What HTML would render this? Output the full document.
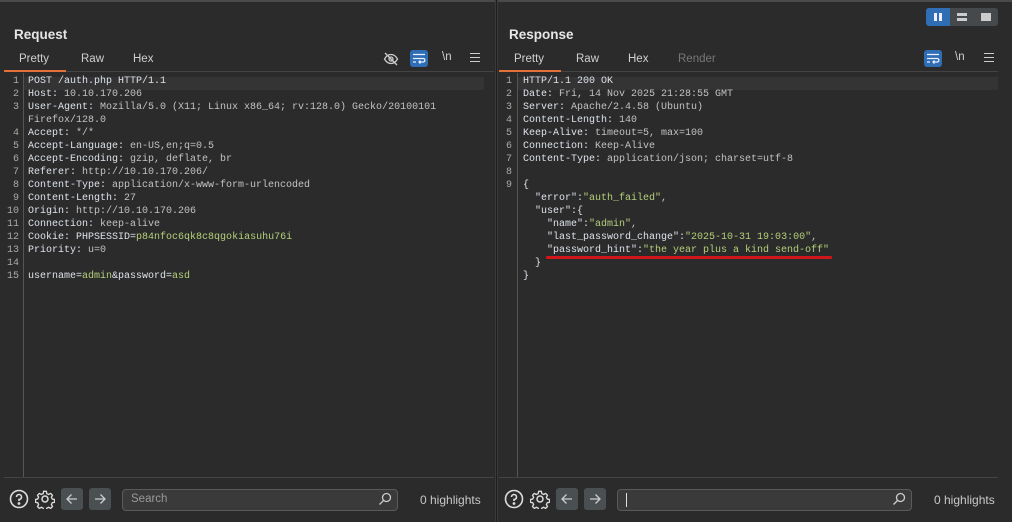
<!DOCTYPE html>
<html><head><meta charset="utf-8"><style>
*{margin:0;padding:0;box-sizing:border-box}
body{width:1012px;height:522px;background:#2b2b2b;font-family:"Liberation Sans",sans-serif;color:#ddd;position:relative;overflow:hidden}
.abs{position:absolute}
.title{font-weight:bold;font-size:13.5px;color:#e6e6e6}
.tab{font-size:11.5px;color:#d0d0d0}
.code{font-family:"Liberation Mono",monospace;font-size:10px;line-height:13px;white-space:pre;color:#c2c2c2}
.k{color:#dde2ea}.g{color:#b5cf7a}
.ln{font-family:"Liberation Mono",monospace;font-size:10px;line-height:13px;color:#aaa;text-align:right;white-space:pre}
.btn{width:22px;height:22px;border-radius:3px;background:#4a4f52;}
.search{border:1px solid #5a5a5a;border-radius:4px;background:#3a3a3a;height:22px}
</style></head><body>
<div class="abs" style="left:0;top:0;width:1012px;height:2px;background:#4a4a4a"></div>
<div class="abs" style="left:495px;top:0;width:3px;height:522px;background:#3a3a3a"></div>
<div class="abs" style="left:496px;top:0;width:1px;height:522px;background:#1e1e1e"></div>

<!-- LEFT -->
<div class="abs title" style="left:14px;top:27px">Request</div>
<div class="abs tab" style="left:19px;top:53px">Pretty</div>
<div class="abs tab" style="left:81px;top:53px">Raw</div>
<div class="abs tab" style="left:133px;top:53px">Hex</div>
<div class="abs" style="left:4px;top:70px;width:62px;height:2px;background:#e3703a"></div>
<div class="abs" style="left:66px;top:71px;width:428px;height:1px;background:#444"></div>
<svg class="abs" style="left:383px;top:51px" width="16" height="16" viewBox="0 0 16 16" fill="none" stroke="#ccc" stroke-width="1.3"><path d="M1.5 8C3.5 4.5 6 3.5 8 3.5S12.5 4.5 14.5 8C12.5 11.5 10 12.5 8 12.5S3.5 11.5 1.5 8Z"/><circle cx="8" cy="8" r="2"/><path d="M2 2L14 14"/></svg>
<div class="abs" style="left:410px;top:50px;width:18px;height:17px;border-radius:3px;background:#2f6db5"></div>
<svg class="abs" style="left:412px;top:52px" width="14" height="13" viewBox="0 0 14 13" fill="none" stroke="#e8f0ff" stroke-width="1.3"><path d="M1 2.5H13M1 6.5H11.5A1.8 1.8 0 0 1 11.5 10H7M8.5 8.5L7 10L8.5 11.5M1 10H4"/></svg>
<div class="abs tab" style="left:442px;top:51px">\n</div>
<div class="abs" style="left:470px;top:53px;width:10px;height:9px;border-top:1.3px solid #ccc;border-bottom:1.3px solid #ccc"><div style="margin-top:3px;height:1.3px;background:#ccc"></div></div>

<div class="abs" style="left:23px;top:73px;width:1px;height:404px;background:#555"></div>
<div class="abs" style="left:24px;top:77px;width:460px;height:13px;background:#343434"></div>
<div class="abs ln" style="left:0;top:75px;width:19px">1
2
3

4
5
6
7
8
9
10
11
12
13
14
15</div>
<div class="abs code" style="left:28px;top:75px"><span class="k">POST /auth.php HTTP/1.1</span>
<span class="k">Host:</span> 10.10.170.206
<span class="k">User-Agent:</span> Mozilla/5.0 (X11; Linux x86_64; rv:128.0) Gecko/20100101
Firefox/128.0
<span class="k">Accept:</span> */*
<span class="k">Accept-Language:</span> en-US,en;q=0.5
<span class="k">Accept-Encoding:</span> gzip, deflate, br
<span class="k">Referer:</span> http://10.10.170.206/
<span class="k">Content-Type:</span> application/x-www-form-urlencoded
<span class="k">Content-Length:</span> 27
<span class="k">Origin:</span> http://10.10.170.206
<span class="k">Connection:</span> keep-alive
<span class="k">Cookie:</span> <span class="k">PHPSESSID=</span><span class="g">p84nfoc6qk8c8qgokiasuhu76i</span>
<span class="k">Priority:</span> u=0

<span class="k">username=</span><span class="g">admin</span><span class="k">&amp;password=</span><span class="g">asd</span></div>

<div class="abs" style="left:4px;top:477px;width:490px;height:1px;background:#444"></div>

<!-- RIGHT -->
<div class="abs" style="left:926px;top:8px;width:72px;height:18px;border-radius:3px;background:#45494c"></div>
<div class="abs" style="left:926px;top:8px;width:24px;height:18px;border-radius:3px 0 0 3px;background:#2f6db5"></div>
<div class="abs" style="left:934px;top:13px;width:3px;height:8px;background:#eef"></div>
<div class="abs" style="left:939px;top:13px;width:3px;height:8px;background:#eef"></div>
<div class="abs" style="left:957px;top:13px;width:10px;height:3px;background:#ccc"></div>
<div class="abs" style="left:957px;top:18px;width:10px;height:3px;background:#ccc"></div>
<div class="abs" style="left:981px;top:13px;width:10px;height:8px;background:#ccc"></div>

<div class="abs title" style="left:509px;top:27px">Response</div>
<div class="abs tab" style="left:514px;top:53px">Pretty</div>
<div class="abs tab" style="left:576px;top:53px">Raw</div>
<div class="abs tab" style="left:628px;top:53px">Hex</div>
<div class="abs tab" style="left:678px;top:53px;color:#777">Render</div>
<div class="abs" style="left:499px;top:70px;width:62px;height:2px;background:#e3703a"></div>
<div class="abs" style="left:561px;top:71px;width:437px;height:1px;background:#444"></div>
<div class="abs" style="left:924px;top:50px;width:18px;height:17px;border-radius:3px;background:#2f6db5"></div>
<svg class="abs" style="left:926px;top:52px" width="14" height="13" viewBox="0 0 14 13" fill="none" stroke="#e8f0ff" stroke-width="1.3"><path d="M1 2.5H13M1 6.5H11.5A1.8 1.8 0 0 1 11.5 10H7M8.5 8.5L7 10L8.5 11.5M1 10H4"/></svg>
<div class="abs tab" style="left:955px;top:51px">\n</div>
<div class="abs" style="left:984px;top:53px;width:10px;height:9px;border-top:1.3px solid #ccc;border-bottom:1.3px solid #ccc"><div style="margin-top:3px;height:1.3px;background:#ccc"></div></div>

<div class="abs" style="left:517px;top:73px;width:1px;height:404px;background:#555"></div>
<div class="abs" style="left:518px;top:77px;width:480px;height:13px;background:#343434"></div>
<div class="abs ln" style="left:498px;top:75px;width:14px">1
2
3
4
5
6
7
8
9</div>
<div class="abs code" style="left:523px;top:75px"><span class="k">HTTP/1.1 200 OK</span>
<span class="k">Date:</span> Fri, 14 Nov 2025 21:28:55 GMT
<span class="k">Server:</span> Apache/2.4.58 (Ubuntu)
<span class="k">Content-Length:</span> 140
<span class="k">Keep-Alive:</span> timeout=5, max=100
<span class="k">Connection:</span> Keep-Alive
<span class="k">Content-Type:</span> application/json; charset=utf-8

<span class="k">{</span>
  <span class="k">"error":</span><span class="g">"auth_failed"</span>,
  <span class="k">"user":{</span>
    <span class="k">"name":</span><span class="g">"admin"</span>,
    <span class="k">"last_password_change":</span><span class="g">"2025-10-31 19:03:00"</span>,
    <span class="k">"password_hint":</span><span class="g">"the year plus a kind send-off"</span>
  <span class="k">}</span>
<span class="k">}</span></div>
<div class="abs" style="left:546px;top:256px;width:286px;height:3px;background:#d0161b;border-radius:1px"></div>
<div class="abs" style="left:499px;top:477px;width:499px;height:1px;background:#444"></div>

<!-- bottom bars -->
<svg class="abs" style="left:9px;top:489px" width="20" height="20" viewBox="0 0 20 20" fill="none" stroke="#ddd" stroke-width="1.6"><circle cx="10" cy="10" r="8.5"/><path d="M7.5 8A2.5 2.5 0 1 1 10 10.5V12"/><circle cx="10" cy="14.5" r=".6" fill="#ddd"/></svg>
<svg class="abs" style="left:35px;top:489px" width="20" height="20" viewBox="0 0 20 20" fill="none" stroke="#ddd" stroke-width="1.5"><circle cx="10" cy="10" r="3"/><path d="M8.5 1.5h3l.5 2.5 2 1 2.3-1.2 2 2-1.2 2.3 1 2 2.5.5v3l-2.5.5-1 2 1.2 2.3-2 2-2.3-1.2-2 1-.5 2.5h-3l-.5-2.5-2-1-2.3 1.2-2-2 1.2-2.3-1-2-2.5-.5v-3l2.5-.5 1-2-1.2-2.3 2-2 2.3 1.2 2-1z" transform="scale(.9) translate(1.1 1.1)"/></svg>
<div class="abs btn" style="left:61px;top:488px"></div>
<div class="abs btn" style="left:89px;top:488px"></div>
<svg class="abs" style="left:66px;top:493px" width="12" height="12" viewBox="0 0 12 12" fill="none" stroke="#ccc" stroke-width="1.3"><path d="M11 6H1M5.5 1.5L1 6L5.5 10.5"/></svg>
<svg class="abs" style="left:94px;top:493px" width="12" height="12" viewBox="0 0 12 12" fill="none" stroke="#ccc" stroke-width="1.3"><path d="M1 6H11M6.5 1.5L11 6L6.5 10.5"/></svg>
<div class="abs search" style="left:122px;top:489px;width:276px"></div>
<div class="abs" style="left:131px;top:493px;font-size:11.5px;color:#999">Search</div>
<svg class="abs" style="left:378px;top:492px" width="14" height="14" viewBox="0 0 14 14" fill="none" stroke="#ccc" stroke-width="1.3"><circle cx="8.5" cy="5.5" r="4"/><path d="M5.5 8.5L1.5 12.5"/></svg>
<div class="abs" style="left:420px;top:493px;font-size:12px;color:#c8c8c8">0 highlights</div>

<svg class="abs" style="left:504px;top:489px" width="20" height="20" viewBox="0 0 20 20" fill="none" stroke="#ddd" stroke-width="1.6"><circle cx="10" cy="10" r="8.5"/><path d="M7.5 8A2.5 2.5 0 1 1 10 10.5V12"/><circle cx="10" cy="14.5" r=".6" fill="#ddd"/></svg>
<svg class="abs" style="left:530px;top:489px" width="20" height="20" viewBox="0 0 20 20" fill="none" stroke="#ddd" stroke-width="1.5"><circle cx="10" cy="10" r="3"/><path d="M8.5 1.5h3l.5 2.5 2 1 2.3-1.2 2 2-1.2 2.3 1 2 2.5.5v3l-2.5.5-1 2 1.2 2.3-2 2-2.3-1.2-2 1-.5 2.5h-3l-.5-2.5-2-1-2.3 1.2-2-2 1.2-2.3-1-2-2.5-.5v-3l2.5-.5 1-2-1.2-2.3 2-2 2.3 1.2 2-1z" transform="scale(.9) translate(1.1 1.1)"/></svg>
<div class="abs btn" style="left:556px;top:488px"></div>
<div class="abs btn" style="left:584px;top:488px"></div>
<svg class="abs" style="left:561px;top:493px" width="12" height="12" viewBox="0 0 12 12" fill="none" stroke="#ccc" stroke-width="1.3"><path d="M11 6H1M5.5 1.5L1 6L5.5 10.5"/></svg>
<svg class="abs" style="left:589px;top:493px" width="12" height="12" viewBox="0 0 12 12" fill="none" stroke="#ccc" stroke-width="1.3"><path d="M1 6H11M6.5 1.5L11 6L6.5 10.5"/></svg>
<div class="abs search" style="left:617px;top:489px;width:295px"></div>
<div class="abs" style="left:626px;top:493px;width:1px;height:14px;background:#ddd"></div>
<svg class="abs" style="left:892px;top:492px" width="14" height="14" viewBox="0 0 14 14" fill="none" stroke="#ccc" stroke-width="1.3"><circle cx="8.5" cy="5.5" r="4"/><path d="M5.5 8.5L1.5 12.5"/></svg>
<div class="abs" style="left:934px;top:493px;font-size:12px;color:#c8c8c8">0 highlights</div>
</body></html>
